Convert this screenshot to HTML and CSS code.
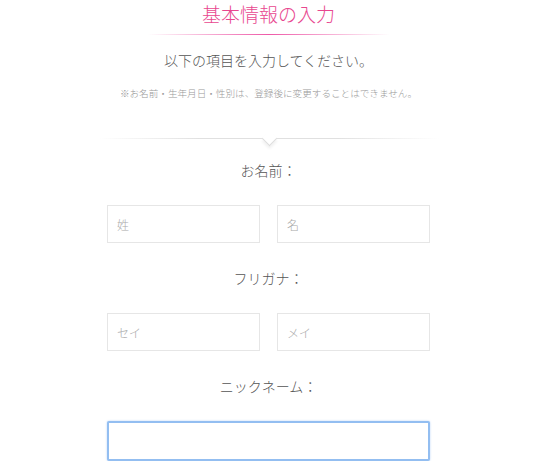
FILE: index.html
```html
<!DOCTYPE html>
<html lang="ja">
<head>
    <meta charset="UTF-8">
    <meta name="viewport" content="width=device-width, initial-scale=1.0">
    <title>基本情報の入力</title>
    <link rel="stylesheet" href="styles.css">
</head>
<body>

    <!-- Heading -->
    <div class="page">
        <h1 class="title">基本情報の入力</h1>
        <div class="title-line"></div>
        <p class="lead">以下の項目を入力してください。</p>
        <p class="note">※お名前・生年月日・性別は、登録後に変更することはできません。</p>

        <div class="divider"></div>

        <!-- Form -->
        <form class="profile-form">
            <div class="field">
                <label class="field-label">お名前：</label>
                <div class="field-row">
                    <input type="text" class="text-input" placeholder="姓">
                    <input type="text" class="text-input" placeholder="名">
                </div>
            </div>
            <div class="field">
                <label class="field-label">フリガナ：</label>
                <div class="field-row">
                    <input type="text" class="text-input" placeholder="セイ">
                    <input type="text" class="text-input" placeholder="メイ">
                </div>
            </div>
            <div class="field">
                <label class="field-label">ニックネーム：</label>
                <div class="field-row">
                    <input type="text" class="text-input is-focused">
                </div>
            </div>
        </form>
    </div>

</body>
</html>
```

FILE: styles.css
```css
/* Global */
body {
    margin: 0;
    padding: 0;
    background-color: #fff;
    color: #555;
    font-family: "Noto Sans CJK JP", "Noto Sans", sans-serif;
    font-weight: 300;
}

.page {
    width: 323px;
    margin: 0 auto;
    padding-left: 4px;
    display: flex;
    flex-direction: column;
    align-items: center;
}

/* Heading */
.title {
    margin: 0;
    font-size: 19px;
    line-height: 28px;
    font-weight: 300;
    color: #e8478f;
}

.title-line {
    width: 242px;
    height: 1px;
    margin-top: 6px;
    background: linear-gradient(to right, rgba(236, 80, 160, 0), #ee5aa8 50%, rgba(236, 80, 160, 0));
}

.lead {
    margin: 15px 0 0;
    font-size: 14px;
    line-height: 20px;
    color: #555;
}

.note {
    margin: 16px 0 0;
    font-size: 9.6px;
    line-height: 14px;
    color: #999;
    white-space: nowrap;
}

/* Divider with notch */
.divider {
    position: relative;
    width: 340px;
    height: 1px;
    margin-top: 38px;
    background: linear-gradient(to right, rgba(0, 0, 0, 0), #e0e0e0 30%, #e0e0e0 70%, rgba(0, 0, 0, 0));
    box-shadow: 0 2px 3px -1px rgba(0, 0, 0, 0.06);
}

.divider::after {
    content: "";
    position: absolute;
    left: 50%;
    top: -5px;
    width: 10px;
    height: 10px;
    margin-left: -5px;
    background: #fff;
    border-right: 1px solid #ddd;
    border-bottom: 1px solid #ddd;
    transform: rotate(45deg);
    box-shadow: 2px 2px 3px rgba(0, 0, 0, 0.06);
}

/* Form */
.profile-form {
    width: 323px;
    margin-top: 21px;
    display: flex;
    flex-direction: column;
    gap: 25px;
}

.field {
    display: flex;
    flex-direction: column;
    align-items: center;
    gap: 25px;
}

.field-label {
    font-size: 14px;
    line-height: 20px;
    color: #555;
}

.field-row {
    width: 100%;
    display: flex;
    gap: 17px;
}

.text-input {
    flex: 1;
    min-width: 0;
    height: 38px;
    box-sizing: border-box;
    padding: 0 9px;
    border: 1px solid #e6e6e6;
    border-radius: 0;
    font-family: inherit;
    font-weight: 300;
    font-size: 12px;
    color: #555;
    outline: none;
}

.text-input::placeholder {
    color: #aaa;
}

.text-input.is-focused {
    height: 40px;
    border: 2px solid #93bef1;
    border-radius: 2px;
    box-shadow: 0 0 2px rgba(120, 170, 240, 0.6);
}
```
